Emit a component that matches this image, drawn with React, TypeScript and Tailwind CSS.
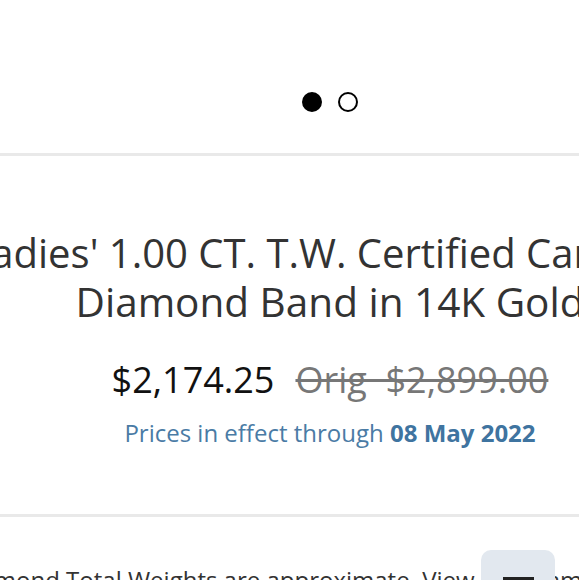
import { useState } from "react";

const Dots = ({ active }: { active: number }) => {
  return (
    <div className="flex items-center justify-center gap-4 pl-[80px]">
      {[0, 1].map((i) => (
        <div
          key={i}
          className={`w-5 h-5 rounded-full border-2 border-black ${
            i === active ? "bg-black" : "bg-white"
          }`}
        ></div>
      ))}
    </div>
  );
};

const Price = () => {
  return (
    <div className="flex flex-col items-center">
      <div className="flex items-baseline gap-[21px] text-[36px] leading-[48px]">
        <span className="text-[#111]">$2,174.25</span>
        <span className="text-[#777] line-through decoration-[3px]">
          Orig&nbsp; $2,899.00
        </span>
      </div>
      <div className="mt-[9px] text-[24px] leading-[40px] text-[#4a7ba5]">
        Prices in effect through{" "}
        <span className="font-bold text-[#3f74a0]">08 May 2022</span>
      </div>
    </div>
  );
};

const App = () => {
  const [slide] = useState(0);

  return (
    <div className="w-[579px] h-[580px] overflow-hidden bg-white font-['Open_Sans',sans-serif]">
      <div className="h-[156px] pt-[92px] border-b-[3px] border-[#e9e9e9]">
        <Dots active={slide} />
      </div>

      <div className="w-[720px] -ml-[30px] pt-[72px] pb-[61px] border-b-[3px] border-[#e9e9e9] flex flex-col items-center">
        <h1 className="flex flex-col items-center whitespace-nowrap text-[40.5px] leading-[49px] text-[#333]">
          <span className="pl-[12px] text-[40px]">Ladies' 1.00 CT. T.W. Certified Canadian</span>
          <span>Diamond Band in 14K Gold</span>
        </h1>
        <div className="mt-[30px]">
          <Price />
        </div>
      </div>

      <div className="relative pt-[43px] -ml-[43px] whitespace-nowrap text-[24px] leading-[40px] text-[#333]">
        Diamond Total Weights are approximate. View our diamond disclaimer
        <button className="absolute left-[524px] top-[33px] w-[74px] h-[60px] rounded-[10px] bg-[#e2e8ef] flex justify-center pt-[27px]">
          <span className="block w-[31px] h-[3px] bg-[#222]"></span>
        </button>
      </div>
    </div>
  );
};

export default App;
